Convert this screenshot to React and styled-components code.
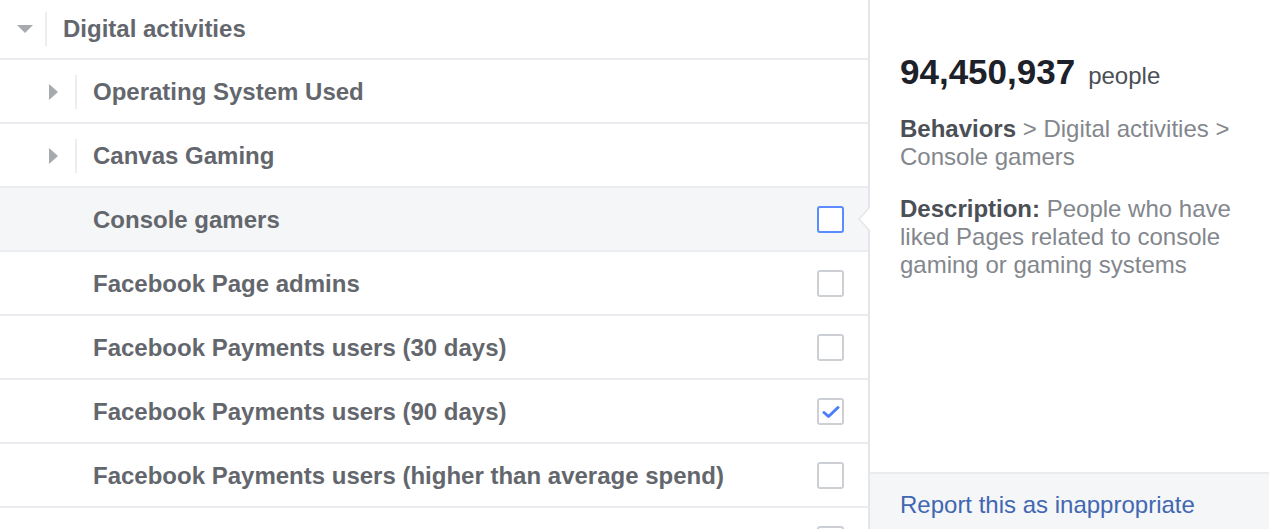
import React from "react";
import styled, { createGlobalStyle } from "styled-components";

const Global = createGlobalStyle`
  html, body { margin: 0; padding: 0; background: #fff; }
  body { font-family: "Liberation Sans", Arial, sans-serif; overflow: hidden; }
`;

const Page = styled.div`
  display: flex;
  height: 529px;
  width: 1269px;
  overflow: hidden;
`;

const List = styled.div`
  flex: 0 0 868px;
  display: flex;
  flex-direction: column;
`;

const Row = styled.div`
  display: flex;
  align-items: center;
  flex: 0 0 auto;
  height: ${(p) => (p.$header ? "57px" : "61px")};
  padding-bottom: ${(p) => (p.$header ? "1px" : "0")};
  padding-top: ${(p) => (p.$header ? "0" : "1px")};
  box-sizing: content-box;
  border-bottom: 2px solid #ebedf0;
  background: ${(p) => (p.$active ? "#f5f6f7" : "#fff")};
  padding-right: 24px;
`;

const Caret = styled.div`
  flex: 0 0 auto;
  width: 0;
  height: 0;
  ${(p) =>
    p.$open
      ? `border-left: 8px solid transparent; border-right: 8px solid transparent; border-top: 8px solid #a6a9ae; margin-left: 17px; margin-right: 12px;`
      : `border-top: 8px solid transparent; border-bottom: 8px solid transparent; border-left: 9px solid #a6a9ae; margin-left: 49px; margin-right: 17px;`}
`;

const Divider = styled.div`
  flex: 0 0 auto;
  width: 2px;
  height: 34px;
  background: #ebedf0;
  margin-right: ${(p) => p.$gap}px;
`;

const Spacer = styled.div`
  flex: 0 0 93px;
`;

const Label = styled.span`
  flex: 1;
  font-size: 24px;
  font-weight: bold;
  color: #63676d;
  white-space: nowrap;
`;

const Box = styled.div`
  flex: 0 0 auto;
  width: 23px;
  height: 23px;
  border-radius: 3px;
  border: 2px solid ${(p) => (p.$focus ? "#5a8cff" : "#ccd0d5")};
  background: #fff;
  display: flex;
  align-items: center;
  justify-content: center;
`;

const Panel = styled.div`
  flex: 1;
  position: relative;
  border-left: 2px solid #e4e6e9;
  display: flex;
  flex-direction: column;
  background: #fff;
`;

const Notch = styled.div`
  position: absolute;
  left: -12px;
  top: 207px;
  width: 0;
  height: 0;
  border-top: 12px solid transparent;
  border-bottom: 12px solid transparent;
  border-right: 11px solid #e4e6e9;
  &::after {
    content: "";
    position: absolute;
    left: 2px;
    top: -11px;
    width: 0;
    height: 0;
    border-top: 11px solid transparent;
    border-bottom: 11px solid transparent;
    border-right: 10px solid #fff;
  }
`;

const Body = styled.div`
  flex: 1;
  padding: 52px 30px 0 30px;
`;

const Count = styled.div`
  display: flex;
  align-items: baseline;
  gap: 13px;
  margin-bottom: 19px;
  line-height: 40px;
`;

const Big = styled.span`
  font-size: 35px;
  font-weight: bold;
  color: #1d2129;
`;

const Unit = styled.span`
  font-size: 24px;
  color: #4b4f56;
`;

const Para = styled.p`
  margin: 0 0 24px 0;
  font-size: 24px;
  line-height: 28px;
  color: #83878d;
`;

const Strong = styled.b`
  color: #4b4f56;
`;

const Footer = styled.div`
  flex: 0 0 auto;
  height: 57px;
  border-top: 2px solid #e9ebee;
  background: #f5f6f7;
  padding: 17px 30px 0;
  box-sizing: border-box;
  line-height: 28px;
`;

const Link = styled.a`
  font-size: 24px;
  color: #4267b2;
  text-decoration: none;
`;

const Check = () => (
  <svg width="18" height="14" viewBox="0 0 18 14">
    <path d="M2 7.5 L6.5 11.5 L16 2.5" fill="none" stroke="#4a7ff7" strokeWidth="3" strokeLinecap="round" strokeLinejoin="round" />
  </svg>
);

const items = [
  { label: "Console gamers", active: true, focus: true },
  { label: "Facebook Page admins" },
  { label: "Facebook Payments users (30 days)" },
  { label: "Facebook Payments users (90 days)", checked: true },
  { label: "Facebook Payments users (higher than average spend)" },
  { label: "" },
];

export default function App() {
  return (
    <>
      <Global />
      <Page>
        <List>
          <Row $header>
            <Caret $open />
            <Divider $gap={16} />
            <Label>Digital activities</Label>
          </Row>
          {["Operating System Used", "Canvas Gaming"].map((t) => (
            <Row key={t}>
              <Caret />
              <Divider $gap={16} />
              <Label>{t}</Label>
            </Row>
          ))}
          {items.map((it, i) => (
            <Row key={i} $active={it.active}>
              <Spacer />
              <Label>{it.label}</Label>
              <Box $focus={it.focus}>{it.checked && <Check />}</Box>
            </Row>
          ))}
        </List>
        <Panel>
          <Notch />
          <Body>
            <Count>
              <Big>94,450,937</Big>
              <Unit>people</Unit>
            </Count>
            <Para>
              <Strong>Behaviors</Strong> &gt; Digital activities &gt; Console gamers
            </Para>
            <Para>
              <Strong>Description:</Strong> People who have liked Pages related to console gaming or gaming systems
            </Para>
          </Body>
          <Footer>
            <Link href="#">Report this as inappropriate</Link>
          </Footer>
        </Panel>
      </Page>
    </>
  );
}
